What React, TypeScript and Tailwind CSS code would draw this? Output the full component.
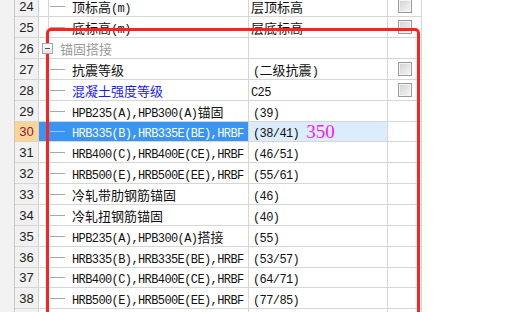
import React from "react";

type Row = {
  n: number;
  name?: string;
  value?: string;
  check?: boolean;
  group?: boolean;
  blue?: boolean;
  sel?: boolean;
  h: string;
};

const rows: Row[] = [
  { n: 24, name: "顶标高(m)", value: "层顶标高", check: true, h: "h-[21px]" },
  { n: 25, name: "底标高(m)", value: "层底标高", check: true, h: "h-[21px]" },
  { n: 26, name: "锚固搭接", group: true, h: "h-[21px]" },
  { n: 27, name: "抗震等级", value: "(二级抗震)", check: true, h: "h-[21px]" },
  { n: 28, name: "混凝土强度等级", value: "C25", check: true, blue: true, h: "h-[21px]" },
  { n: 29, name: "HPB235(A),HPB300(A)锚固", value: "(39)", h: "h-[21px]" },
  { n: 30, name: "HRB335(B),HRB335E(BE),HRBF", value: "(38/41)", sel: true, h: "h-[20px]" },
  { n: 31, name: "HRB400(C),HRB400E(CE),HRBF", value: "(46/51)", h: "h-[21px]" },
  { n: 32, name: "HRB500(E),HRB500E(EE),HRBF", value: "(55/61)", h: "h-[21px]" },
  { n: 33, name: "冷轧带肋钢筋锚固", value: "(46)", h: "h-[21px]" },
  { n: 34, name: "冷轧扭钢筋锚固", value: "(40)", h: "h-[21px]" },
  { n: 35, name: "HPB235(A),HPB300(A)搭接", value: "(55)", h: "h-[21px]" },
  { n: 36, name: "HRB335(B),HRB335E(BE),HRBF", value: "(53/57)", h: "h-[21px]" },
  { n: 37, name: "HRB400(C),HRB400E(CE),HRBF", value: "(64/71)", h: "h-[20px]" },
  { n: 38, name: "HRB500(E),HRB500E(EE),HRBF", value: "(77/85)", h: "h-[21px]" },
  { n: 39, h: "h-[21px]" },
];

function Mixed({ text }: { text: string }) {
  const parts = text.match(/[\x00-\x7f]+|[^\x00-\x7f]+/g) || [];
  return (
    <span className="whitespace-nowrap">
      {parts.map((p, i) =>
        /^[\x00-\x7f]+$/.test(p) ? (
          <span
            key={i}
            className="font-['Liberation_Mono',monospace] text-[12px] tracking-[-0.6px]"
          >
            {p}
          </span>
        ) : (
          <span
            key={i}
            className="font-['Noto_Sans_CJK_SC','Noto_Sans',sans-serif] text-[13px]"
          >
            {p}
          </span>
        )
      )}
    </span>
  );
}

function CheckBox() {
  return (
    <div className="w-[14px] h-[14px] border border-[#9a9a9a] bg-gradient-to-br from-[#d2d2d2] to-[#f6f6f6] shadow-[inset_0_0_0_1px_#f4f4f4]" />
  );
}

export default function App() {
  return (
    <div className="relative w-[520px] h-[312px] overflow-hidden bg-white flex">
      <div className="w-[15px] h-full bg-[#f2f2f2] border-r border-[#c8c8c8] shrink-0" />
      <div className="flex flex-col -mt-[4px] w-[407px] shrink-0">
        {rows.map((r) => (
          <div
            key={r.n}
            className={`flex ${r.h} shrink-0 border-b border-[#d6d6d6] leading-none`}
          >
            <div
              className={`w-[24px] shrink-0 flex items-center justify-center border-r border-[#d0d0d0] font-['Liberation_Sans',sans-serif] text-[13px] ${
                r.sel ? "bg-[#fcd597] text-[#8a2040]" : "bg-[#f1f1f1] text-[#222]"
              }`}
            >
              {r.n}
            </div>
            <div
              className={`w-[10px] shrink-0 flex items-center border-r ${
                r.sel ? "bg-[#3a94f2] border-[#3a94f2]" : "border-[#d6d6d6]"
              }`}
            >
              {r.group && (
                <div className="relative z-10 ml-[3px] w-[11px] h-[11px] shrink-0 border border-[#a8a8a8] bg-gradient-to-b from-white to-[#e4e4e4] flex items-center justify-center">
                  <div className="w-[5px] h-[1px] bg-[#555]" />
                </div>
              )}
            </div>
            <div
              className={`w-[200px] shrink-0 flex items-center border-r border-[#d6d6d6] ${
                r.sel ? "bg-[#3a94f2] text-white" : r.blue ? "text-[#1a1aff]" : r.group ? "text-[#9a9a9a]" : "text-[#111]"
              } ${r.group ? "pl-[11px]" : ""}`}
            >
              {r.name && !r.group && (
                <div
                  className={`ml-[1px] mr-[7px] w-[15px] h-[1px] shrink-0 ${
                    r.sel ? "bg-[#9cc8f6]" : "bg-[#a8a8a8]"
                  }`}
                />
              )}
              {r.name && <Mixed text={r.name} />}
            </div>
            <div
              className={`w-[139px] shrink-0 flex items-center border-r border-[#d6d6d6] text-[#111] ${
                r.sel ? "bg-[#dcecfc]" : ""
              } ${r.value && r.value.startsWith("(") ? "pl-[4px]" : "pl-[2px]"}`}
            >
              {r.value && <Mixed text={r.value} />}
              {r.sel && (
                <span className="ml-[7px] font-['Liberation_Serif',serif] text-[19px] text-[#f020f0]">
                  350
                </span>
              )}
            </div>
            <div className="w-[34px] shrink-0 flex items-center justify-center border-r border-[#d6d6d6]">
              {r.check && <CheckBox />}
            </div>
          </div>
        ))}
      </div>
      <div className="absolute left-[46px] top-[28px] w-[374px] h-[300px] border-[3px] border-[#ff2020] rounded-[5px] pointer-events-none" />
    </div>
  );
}
